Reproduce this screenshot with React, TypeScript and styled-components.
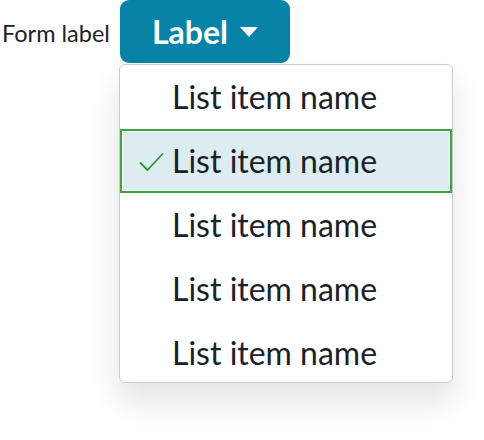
import styled, { createGlobalStyle } from "styled-components";

const GlobalStyle = createGlobalStyle`
  html, body {
    margin: 0;
    padding: 0;
    background: #ffffff;
    font-family: Lato, "Noto Sans", sans-serif;
    color: #1b2227;
  }
`;

const ITEMS = [
  "List item name",
  "List item name",
  "List item name",
  "List item name",
  "List item name",
];

const SELECTED = 1;

const CheckIcon = () => (
  <svg width="25" height="20" viewBox="0 0 25 20" fill="none">
    <path
      d="M1.5 11 L8.5 18 L23.5 2"
      stroke="#2b963a"
      strokeWidth="1.8"
      strokeLinecap="round"
      strokeLinejoin="round"
    />
  </svg>
);

const App = () => {
  return (
    <>
      <GlobalStyle />
      <Row>
        <FormLabel>Form label</FormLabel>
        <Anchor>
          <Trigger type="button">
            Label
            <Caret />
          </Trigger>
          <Menu>
            {ITEMS.map((name, i) => (
              <Item key={i} $selected={i === SELECTED}>
                <CheckSlot>{i === SELECTED && <CheckIcon />}</CheckSlot>
                {name}
              </Item>
            ))}
          </Menu>
        </Anchor>
      </Row>
    </>
  );
};

export default App;

const Row = styled.div`
  display: flex;
  align-items: flex-start;
  padding-left: 2px;
  height: 440px;
`;

const FormLabel = styled.span`
  width: 118px;
  font-size: 23.5px;
  line-height: 28px;
  margin-top: 19px;
  white-space: nowrap;
  color: #1b2227;
`;

const Anchor = styled.div`
  position: relative;
`;

const Trigger = styled.button`
  display: flex;
  align-items: center;
  justify-content: center;
  gap: 12px;
  width: 170px;
  height: 63px;
  border: none;
  border-radius: 9px;
  background: #0683a6;
  color: #ffffff;
  font-family: Lato, "Noto Sans", sans-serif;
  font-weight: 700;
  font-size: 32px;
  padding: 0 0 1px 0;
  cursor: pointer;
`;

const Caret = styled.span`
  width: 0;
  height: 0;
  border-left: 9px solid transparent;
  border-right: 9px solid transparent;
  border-top: 10px solid #ffffff;
  margin-top: 1px;
`;

const Menu = styled.ul`
  position: absolute;
  top: 64px;
  left: -1px;
  width: 334px;
  height: 319px;
  box-sizing: border-box;
  margin: 0;
  padding: 0;
  list-style: none;
  overflow: hidden;
  background: #ffffff;
  border: 1px solid #c5cbcf;
  border-radius: 6px;
  box-shadow: 0 18px 30px 2px rgba(0, 0, 0, 0.1);
`;

const Item = styled.li<{ $selected?: boolean }>`
  display: flex;
  align-items: center;
  height: 64px;
  box-sizing: border-box;
  padding-left: 17px;
  font-size: 32px;
  color: #1b2227;
  background: ${({ $selected }) => ($selected ? "#dcecf0" : "transparent")};
  border: 2px solid ${({ $selected }) => ($selected ? "#3aa63c" : "transparent")};
  box-shadow: ${({ $selected }) =>
    $selected ? "inset 0 0 0 1px #ffffff" : "none"};
  padding-bottom: 1px;
`;

const CheckSlot = styled.span`
  display: flex;
  align-items: center;
  width: 33px;
  margin-top: 3px;
`;
